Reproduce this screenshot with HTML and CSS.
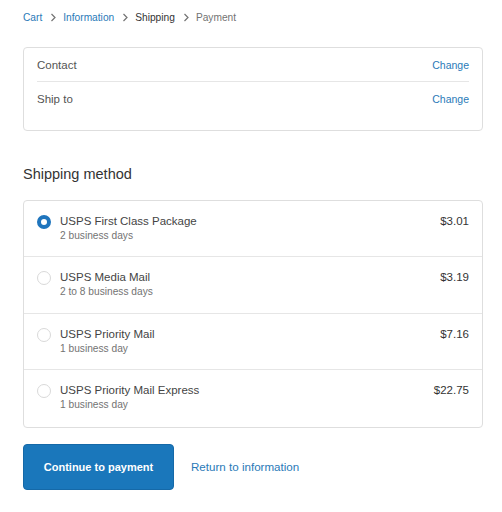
FILE: index.html
```html
<!DOCTYPE html>
<html>
<head>
<meta charset="utf-8">
<link rel="stylesheet" href="styles.css">
</head>
<body>
<main class="page">
  <nav class="crumbs">
    <a class="crumb link">Cart</a>
    <span class="chev"><svg width="7" height="9" viewBox="0 0 7 9"><path d="M1.5 1 L5 4.5 L1.5 8" fill="none" stroke="#737373" stroke-width="1.2"/></svg></span>
    <a class="crumb link">Information</a>
    <span class="chev"><svg width="7" height="9" viewBox="0 0 7 9"><path d="M1.5 1 L5 4.5 L1.5 8" fill="none" stroke="#737373" stroke-width="1.2"/></svg></span>
    <span class="crumb current">Shipping</span>
    <span class="chev"><svg width="7" height="9" viewBox="0 0 7 9"><path d="M1.5 1 L5 4.5 L1.5 8" fill="none" stroke="#737373" stroke-width="1.2"/></svg></span>
    <span class="crumb future">Payment</span>
  </nav>

  <section class="review">
    <div class="review-row">
      <span class="review-label">Contact</span>
      <a class="change link">Change</a>
    </div>
    <div class="review-row">
      <span class="review-label">Ship to</span>
      <a class="change link">Change</a>
    </div>
  </section>

  <h2 class="section-title">Shipping method</h2>

  <section class="methods">
    <div class="method">
      <span class="radio checked"></span>
      <div class="method-text">
        <div class="method-name">USPS First Class Package</div>
        <div class="method-days">2 business days</div>
      </div>
      <span class="price">$3.01</span>
    </div>
    <div class="method">
      <span class="radio"></span>
      <div class="method-text">
        <div class="method-name">USPS Media Mail</div>
        <div class="method-days">2 to 8 business days</div>
      </div>
      <span class="price">$3.19</span>
    </div>
    <div class="method">
      <span class="radio"></span>
      <div class="method-text">
        <div class="method-name">USPS Priority Mail</div>
        <div class="method-days">1 business day</div>
      </div>
      <span class="price">$7.16</span>
    </div>
    <div class="method">
      <span class="radio"></span>
      <div class="method-text">
        <div class="method-name">USPS Priority Mail Express</div>
        <div class="method-days">1 business day</div>
      </div>
      <span class="price">$22.75</span>
    </div>
  </section>

  <div class="actions">
    <button class="continue">Continue to payment</button>
    <a class="return link">Return to information</a>
  </div>
</main>
</body>
</html>
```

FILE: styles.css
```css
* { box-sizing: border-box; }
html, body { margin: 0; padding: 0; background: #fff; }
body {
  font-family: "Liberation Sans", Arial, sans-serif;
  color: #333;
  -webkit-font-smoothing: antialiased;
}
.page {
  width: 502px;
  padding: 10px 19px 0 23px;
}
.link { color: #2a7ab8; text-decoration: none; }

.crumbs {
  display: flex;
  align-items: center;
  height: 14px;
  font-size: 10.2px;
}
.chev { display: flex; align-items: center; margin: 0 6px 0 8px; }
.crumb.current { color: #333; }
.crumb.future { color: #737373; }

.review {
  margin-top: 23px;
  border: 1px solid #dedede;
  border-radius: 4px;
  padding: 0 13px;
  height: 84px;
}
.review-row {
  display: flex;
  justify-content: space-between;
  align-items: center;
  height: 34px;
  font-size: 11.5px;
}
.review-row:first-child { border-bottom: 1px solid #e6e6e6; }
.review-label { color: #545454; }
.change { font-size: 10.5px; }

.section-title {
  margin: 34px 0 0;
  font-size: 14.5px;
  font-weight: normal;
  color: #333;
  line-height: 18px;
}

.methods {
  margin-top: 17px;
  border: 1px solid #dedede;
  border-radius: 4px;
}
.method {
  display: flex;
  align-items: flex-start;
  height: 56.4px;
  padding: 13px 13px 0 13px;
  border-bottom: 1px solid #e6e6e6;
}
.method:last-child { border-bottom: none; }
.radio {
  width: 14px;
  height: 14px;
  border-radius: 50%;
  border: 1px solid #d9d9d9;
  margin-top: 1px;
  flex: none;
}
.radio.checked {
  border: 4.5px solid #1f75bd;
  background: #fff;
}
.method-text { flex: 1; margin-left: 9px; }
.method-name { font-size: 11.5px; line-height: 14px; color: #444; }
.method-days { font-size: 10.2px; line-height: 14px; color: #737373; margin-top: 1px; }
.price { font-size: 11.5px; line-height: 14px; color: #333; }

.actions {
  display: flex;
  align-items: center;
  margin-top: 16px;
}
.continue {
  width: 151px;
  height: 46px;
  background: #1a77bb;
  border: 1px solid #1569a8;
  border-radius: 4px;
  color: #fff;
  font-family: "Liberation Sans", Arial, sans-serif;
  font-weight: bold;
  font-size: 11px;
  padding: 0;
}
.return { margin-left: 17px; font-size: 11.6px; }
```
